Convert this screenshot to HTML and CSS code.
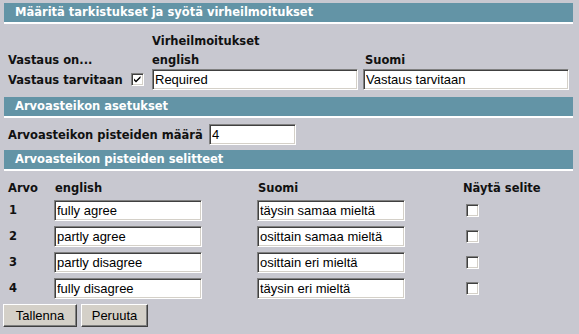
FILE: index.html
```html
<!DOCTYPE html>
<html lang="fi">
<head>
<meta charset="utf-8">
<title>Arvoasteikko</title>
<link rel="stylesheet" href="styles.css">
</head>
<body>
<div class="page">
  <div class="bar">Määritä tarkistukset ja syötä virheilmoitukset</div>
  <div class="sec1">
    <span class="lbl c3">Virheilmoitukset</span>
    <span class="lbl c1">Vastaus on...</span>
    <span class="lbl c3">english</span>
    <span class="lbl c4">Suomi</span>
    <span class="lbl c1">Vastaus tarvitaan</span>
    <span class="cb c2"><svg width="11" height="11" viewBox="0 0 11 11"><path d="M2 4.5 L4 6.5 L8.5 2 V4 L4 8.5 L2 6.5 Z" fill="#000"/></svg></span>
    <input class="field wide c3" type="text" value="Required">
    <input class="field wide c4" type="text" value="Vastaus tarvitaan">
  </div>
  <div class="bar">Arvoasteikon asetukset</div>
  <div class="sec2">
    <span class="lbl">Arvoasteikon pisteiden määrä</span>
    <input class="field short" type="text" value="4">
  </div>
  <div class="bar">Arvoasteikon pisteiden selitteet</div>
  <div class="sec3">
    <span class="lbl">Arvo</span>
    <span class="lbl hd">english</span>
    <span class="lbl hd">Suomi</span>
    <span class="lbl">Näytä selite</span>

    <span class="lbl num">1</span>
    <input class="field mid" type="text" value="fully agree">
    <input class="field mid" type="text" value="täysin samaa mieltä">
    <span class="cb off"></span>

    <span class="lbl num">2</span>
    <input class="field mid" type="text" value="partly agree">
    <input class="field mid" type="text" value="osittain samaa mieltä">
    <span class="cb off"></span>

    <span class="lbl num">3</span>
    <input class="field mid" type="text" value="partly disagree">
    <input class="field mid" type="text" value="osittain eri mieltä">
    <span class="cb off"></span>

    <span class="lbl num">4</span>
    <input class="field mid" type="text" value="fully disagree">
    <input class="field mid" type="text" value="täysin eri mieltä">
    <span class="cb off"></span>
  </div>
  <div class="buttons">
    <button class="btn b1" type="button">Tallenna</button>
    <button class="btn b2" type="button">Peruuta</button>
  </div>
</div>
</body>
</html>
```
FILE: styles.css
```css
html, body {
  margin: 0;
  padding: 0;
  background: #c8c8d0;
}
body {
  width: 579px;
  height: 334px;
  overflow: hidden;
  font-family: "DejaVu Sans", Verdana, sans-serif;
  color: #111;
}
.page {
  padding: 3px 6px 0 4px;
}
.bar {
  height: 19px;
  line-height: 19px;
  background: #6394a6;
  border-bottom: 2px solid #fff;
  color: #fff;
  font-weight: bold;
  font-size: 11.5px;
  padding-left: 11px;
  white-space: nowrap;
}
.lbl {
  font-weight: bold;
  font-size: 11.5px;
  white-space: nowrap;
}
.sec1 {
  display: grid;
  grid-template-columns: 124px 20px 211px 206px;
  grid-template-rows: 19px 19px 21px;
  align-items: center;
  padding: 7px 0 7px 4px;
}
.c1 { grid-column: 1; }
.c2 { grid-column: 2; }
.c3 { grid-column: 3; }
.c4 { grid-column: 4; }
.sec1 .c4.lbl { padding-left: 2px; }

.field {
  box-sizing: border-box;
  height: 21px;
  margin: 0;
  padding: 0 1px;
  background: #fff;
  border: 1px solid;
  border-color: #808080 #ffffff #ffffff #808080;
  box-shadow: inset 1px 1px 0 #404040, inset -1px -1px 0 #d4d0c8;
  font-family: "Liberation Sans", Arial, sans-serif;
  font-size: 13px;
  color: #000;
  outline: none;
}
.field { padding-left: 2px; }
.wide { width: 206px; }
.short { width: 87px; }
.mid { width: 148px; }

.cb {
  box-sizing: border-box;
  width: 13px;
  height: 13px;
  background: #fff;
  border: 1px solid;
  border-color: #808080 #ffffff #ffffff #808080;
  box-shadow: inset 1px 1px 0 #404040, inset -1px -1px 0 #d4d0c8;
  display: flex;
  align-items: center;
  justify-content: center;
}
.sec1 .cb { margin-left: -1px; }
.cb svg { display: block; }

.sec2 {
  display: grid;
  grid-template-columns: 201px 87px;
  align-items: center;
  height: 21px;
  padding: 6px 0 5px 4px;
}

.sec3 {
  display: grid;
  grid-template-columns: 46px 203px 206px 1fr;
  grid-template-rows: 19px 26px 26px 26px 26px;
  align-items: center;
  padding: 7px 0 0 4px;
}
.sec3 .hd { padding-left: 1px; }
.sec3 .num { padding-left: 1px; }
.sec3 .off { margin-left: 3px; }

.buttons {
  display: flex;
  gap: 4px;
  margin: 3px 0 0 -1px;
}
.btn {
  box-sizing: border-box;
  height: 23px;
  margin: 0;
  padding: 0;
  background: #d4d0c8;
  border: 1px solid;
  border-color: #ffffff #404040 #404040 #ffffff;
  box-shadow: inset -1px -1px 0 #808080;
  font-family: "Liberation Sans", Arial, sans-serif;
  font-size: 13px;
  color: #000;
}
.b1 { width: 74px; }
.b2 { width: 67px; }
```
